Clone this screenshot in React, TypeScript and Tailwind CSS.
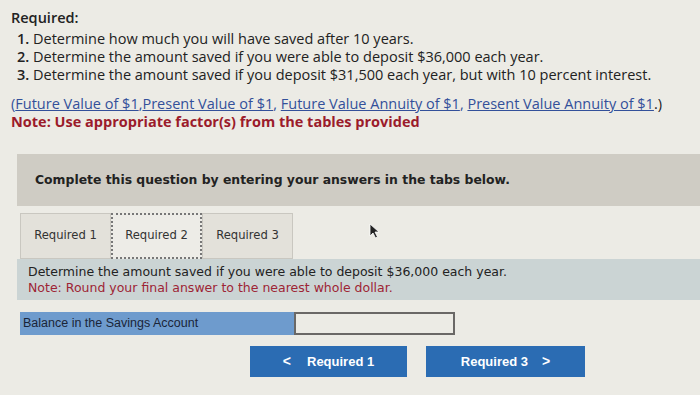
// Homework question view: requirements, tabbed answer area and nav buttons.

const verdana = "font-['DejaVu_Sans',Verdana,sans-serif]";

function Tab({ label, active }: { label: string; active?: boolean }) {
  return (
    <div
      className={`flex h-[46px] w-[91px] items-center justify-center text-[11.6px] text-[#333] ${verdana} ${
        active
          ? "border-2 border-dotted border-[#777] bg-[#edece7]"
          : "border border-[#c9c7c0] bg-[#e3e1da]"
      }`}
    >
      {label}
    </div>
  );
}

export default function App() {
  return (
    <div className="h-[395px] w-[700px] overflow-hidden bg-[#ecebe5] font-['Open_Sans',sans-serif] text-[#222]">
      {/* Requirements */}
      <div className="px-[11px] pt-[9px]">
        <p className="mb-[3px] text-[14.5px] font-semibold leading-[18px]">Required:</p>
        <ol className="pl-[6px] text-[14.5px] leading-[18px]">
          <li>
            <b className="font-semibold">1.</b> Determine how much you will have saved after 10 years.
          </li>
          <li>
            <b className="font-semibold">2.</b> Determine the amount saved if you were able to deposit $36,000 each year.
          </li>
          <li>
            <b className="font-semibold">3.</b> Determine the amount saved if you deposit $31,500 each year, but with 10 percent interest.
          </li>
        </ol>
        <p className="mt-[11px] text-[14.5px] leading-[18px] text-[#33509a]">
          (<span className="underline">Future Value of $1</span>,
          <span className="underline">Present Value of $1</span>,{" "}
          <span className="underline">Future Value Annuity of $1</span>,{" "}
          <span className="underline">Present Value Annuity of $1</span>
          <span className="text-[#222]">.)</span>
        </p>
        <p className="text-[14.5px] font-bold leading-[18px] text-[#9b1b2b]">
          Note: Use appropriate factor(s) from the tables provided
        </p>
      </div>

      {/* Instruction banner */}
      <div className={`ml-[17px] mt-[23px] flex h-[52px] items-center bg-[#cfccc4] pl-[18px] text-[12.4px] font-bold text-[#222] ${verdana}`}>
        Complete this question by entering your answers in the tabs below.
      </div>

      {/* Tabs */}
      <div className="relative ml-[20px] mt-[7px] flex">
        <Tab label="Required 1" />
        <Tab label="Required 2" active />
        <Tab label="Required 3" />
        <svg className="absolute left-[349px] top-[10px]" width="12" height="16" viewBox="0 0 12 16">
          <path d="M1 1 L1 13 L4 10 L6.5 15 L8.5 14 L6 9 L10 9 Z" fill="#222" stroke="#fff" strokeWidth="0.8" />
        </svg>
      </div>

      {/* Question panel */}
      <div className={`ml-[17px] flex h-[41px] flex-col justify-center bg-[#cbd4d4] pl-[11px] text-[12.5px] leading-[16px] ${verdana}`}>
        <p className="text-[#222]">Determine the amount saved if you were able to deposit $36,000 each year.</p>
        <p className="text-[#9e2535]">Note: Round your final answer to the nearest whole dollar.</p>
      </div>

      {/* Answer row */}
      <div className="ml-[20px] mt-[12px] flex h-[23px] items-stretch font-['Liberation_Sans',Arial,sans-serif]">
        <div className="flex w-[274px] items-center bg-[#6e9bcd] pl-[3px] text-[12.5px] text-[#1a2538]">
          Balance in the Savings Account
        </div>
        <div className="w-[161px] border-2 border-[#6a6866] bg-[#ecebe5]" />
      </div>

      {/* Nav buttons */}
      <div className="mt-[11px] flex gap-[19px] pl-[250px] font-['Liberation_Sans',Arial,sans-serif] text-[13px] font-bold text-white">
        <div className="flex h-[31px] w-[157px] items-center justify-center gap-[16px] bg-[#2b6cb3]">
          <span className="text-[14px]">&lt;</span>
          <span>Required 1</span>
        </div>
        <div className="flex h-[31px] w-[159px] items-center justify-center gap-[14px] bg-[#2b6cb3]">
          <span>Required 3</span>
          <span className="text-[14px]">&gt;</span>
        </div>
      </div>
    </div>
  );
}
